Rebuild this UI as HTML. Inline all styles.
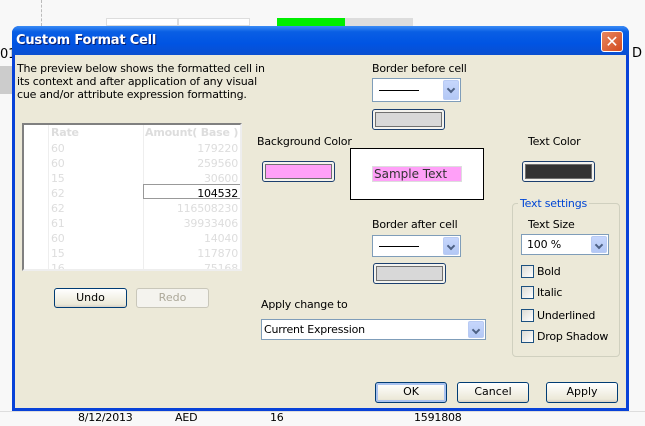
<!DOCTYPE html>
<html><head><style>
*{margin:0;padding:0;box-sizing:border-box}
body{width:645px;height:426px;overflow:hidden;background:#f7f7f7;font-family:"DejaVu Sans","Liberation Sans",sans-serif;font-size:11px;color:#000;position:relative}
.a{position:absolute}
.t{position:absolute;white-space:nowrap;font-size:11px;letter-spacing:-0.2px}
.btn{position:absolute;border:1px solid #003c74;border-radius:3px;background:linear-gradient(#fff,#ece9d8 85%,#d6d0c5);text-align:center;line-height:18px;font-size:11px}
.sw{position:absolute;border:1px solid #1c3f6e;border-radius:3px;background:#f4f3ee;padding:2px}
.sw div{width:100%;height:100%;border:1px solid #707070}
.cb{position:absolute;background:#fff;border:1px solid #7f9db9}
.dd{position:absolute;right:1px;top:1px;bottom:1px;width:16px;background:linear-gradient(#c6d6fc,#b3c8f5);border:1px solid #b9cbf3;border-radius:2px}
.dd:after{content:"";position:absolute;left:4px;top:5px;width:4px;height:4px;border-right:2px solid #4d6185;border-bottom:2px solid #4d6185;transform:rotate(45deg)}
.ck{position:absolute;width:13px;height:13px;border:1px solid #1c5180;background:linear-gradient(135deg,#dcdbd5,#fff)}
.g{color:#ddd}
</style></head><body>
<div class="a" style="left:0;top:0;width:645px;height:426px;background:#f8f8f8"></div>
<div class="a" style="left:41px;top:0;height:26px;border-left:1px dashed #bbb"></div>
<div class="a" style="left:106px;top:18px;width:72px;height:8px;background:#fff;border:1px solid #ddd"></div>
<div class="a" style="left:178px;top:18px;width:72px;height:8px;background:#fff;border:1px solid #ddd"></div>
<div class="a" style="left:277px;top:18px;width:68px;height:8px;background:#00ee00"></div>
<div class="a" style="left:345px;top:18px;width:68px;height:8px;background:#ddd"></div>
<div class="t" style="left:0;top:47px;font-size:13px">01</div>
<div class="a" style="left:0;top:66px;width:12px;height:28px;background:#ccc"></div>
<div class="t" style="left:632px;top:46px;font-size:13px">D</div>
<div class="a" style="left:0;top:411px;width:645px;height:1px;background:#ddd"></div>
<div class="t" style="left:78px;top:411px">8/12/2013</div>
<div class="t" style="left:175px;top:411px">AED</div>
<div class="t" style="left:270px;top:411px">16</div>
<div class="t" style="left:414px;top:411px">1591808</div>
<div class="a" style="left:12px;top:26px;width:617px;height:385px;background:#0842d8;border-radius:7px 7px 0 0"></div>
<div class="a" style="left:12px;top:26px;width:617px;height:29px;border-radius:7px 7px 0 0;background:linear-gradient(#3b8cf5,#0a5fe4 20%,#0054e3 60%,#0a4fd0)"></div>
<div class="t" style="left:16px;top:33px;color:#fff;font-weight:bold;font-size:13px;text-shadow:1px 1px #0a1e6e">Custom Format Cell</div>
<div class="a" style="left:601px;top:31px;width:22px;height:21px;border:1px solid #fff;border-radius:3px;background:linear-gradient(135deg,#e8875f,#d24a1f);color:#fff;font-size:16px;font-weight:bold;text-align:center;line-height:19px">✕</div>
<div class="a" style="left:15px;top:55px;width:611px;height:353px;background:#ece9d8"></div>
<div class="t" style="left:17px;top:62px;line-height:13px">The preview below shows the formatted cell in<br>its context and after application of any visual<br>cue and/or attribute expression formatting.</div>
<div class="a" style="left:22px;top:123px;width:220px;height:148px;background:#fff;border:2px solid #808080;border-right-color:#eee;border-bottom-color:#eee;overflow:hidden">
<div class="a" style="left:24px;top:0;height:150px;border-left:1px solid #eee"></div>
<div class="a" style="left:119px;top:0;height:150px;border-left:1px solid #eee"></div>
<div class="t g" style="left:27px;top:1px;font-weight:bold;line-height:14px">Rate</div>
<div class="t g" style="left:121px;top:1px;width:93px;text-align:right;font-weight:bold;line-height:14px">Amount( Base )</div>
<div class="t g" style="left:27px;top:16px;line-height:15px">60<br>60<br>15<br>62<br>62<br>61<br>60<br>15<br>16</div>
<div class="t g" style="left:121px;top:16px;width:93px;text-align:right;line-height:15px">179220<br>259560<br>30600<br><span style="color:#000">104532</span><br>116508230<br>39933406<br>14040<br>117870<br>75168</div>
<div class="a" style="left:119px;top:59px;width:100px;height:15px;border:1px solid #999;border-right:none"></div>
</div>
<div class="btn" style="left:54px;top:288px;width:73px;height:20px">Undo</div>
<div class="a" style="left:136px;top:288px;width:73px;height:20px;border:1px solid #c9c7ba;border-radius:3px;background:#f4f3ee;text-align:center;line-height:18px;color:#aca899">Redo</div>
<div class="t" style="left:372px;top:62px">Border before cell</div>
<div class="cb" style="left:372px;top:78px;width:89px;height:24px"><div class="a" style="left:6px;top:11px;width:40px;height:1px;background:#000"></div><div class="dd"></div></div>
<div class="sw" style="left:372px;top:109px;width:73px;height:21px"><div style="background:#d8d8d8"></div></div>
<div class="t" style="left:257px;top:135px">Background Color</div>
<div class="sw" style="left:262px;top:161px;width:73px;height:21px"><div style="background:#ffa0f8"></div></div>
<div class="a" style="left:350px;top:148px;width:134px;height:52px;background:#fff;border:1px solid #000"></div>
<div class="a" style="left:372px;top:166px;width:90px;height:16px;background:#ffa0f8;border:1px solid #ddd;color:#333;font-size:12px;line-height:14px;padding-left:1px">Sample Text</div>
<div class="t" style="left:528px;top:135px">Text Color</div>
<div class="sw" style="left:522px;top:161px;width:73px;height:21px"><div style="background:#333"></div></div>
<div class="t" style="left:372px;top:218px">Border after cell</div>
<div class="cb" style="left:372px;top:235px;width:89px;height:22px"><div class="a" style="left:6px;top:10px;width:40px;height:1px;background:#000"></div><div class="dd"></div></div>
<div class="sw" style="left:373px;top:263px;width:73px;height:21px"><div style="background:#d8d8d8"></div></div>
<div class="t" style="left:261px;top:298px">Apply change to</div>
<div class="cb" style="left:261px;top:319px;width:225px;height:21px"><div class="t" style="left:2px;top:3px">Current Expression</div><div class="dd"></div></div>
<div class="a" style="left:512px;top:203px;width:108px;height:154px;border:1px solid #d0d0bf;border-radius:4px"></div>
<div class="t" style="left:518px;top:197px;color:#0046d5;background:#ece9d8;padding:0 2px">Text settings</div>
<div class="t" style="left:528px;top:218px">Text Size</div>
<div class="cb" style="left:521px;top:234px;width:88px;height:21px"><div class="t" style="left:5px;top:3px">100 %</div><div class="dd"></div></div>
<div class="ck" style="left:521px;top:265px"></div><div class="t" style="left:537px;top:265px">Bold</div>
<div class="ck" style="left:521px;top:286px"></div><div class="t" style="left:537px;top:286px">Italic</div>
<div class="ck" style="left:521px;top:309px"></div><div class="t" style="left:537px;top:309px">Underlined</div>
<div class="ck" style="left:521px;top:330px"></div><div class="t" style="left:537px;top:330px">Drop Shadow</div>
<div class="btn" style="left:375px;top:382px;width:72px;height:21px;box-shadow:inset 0 0 0 2px #a9c2ef">OK</div>
<div class="btn" style="left:457px;top:382px;width:72px;height:21px">Cancel</div>
<div class="btn" style="left:546px;top:382px;width:72px;height:21px">Apply</div>
</body></html>
